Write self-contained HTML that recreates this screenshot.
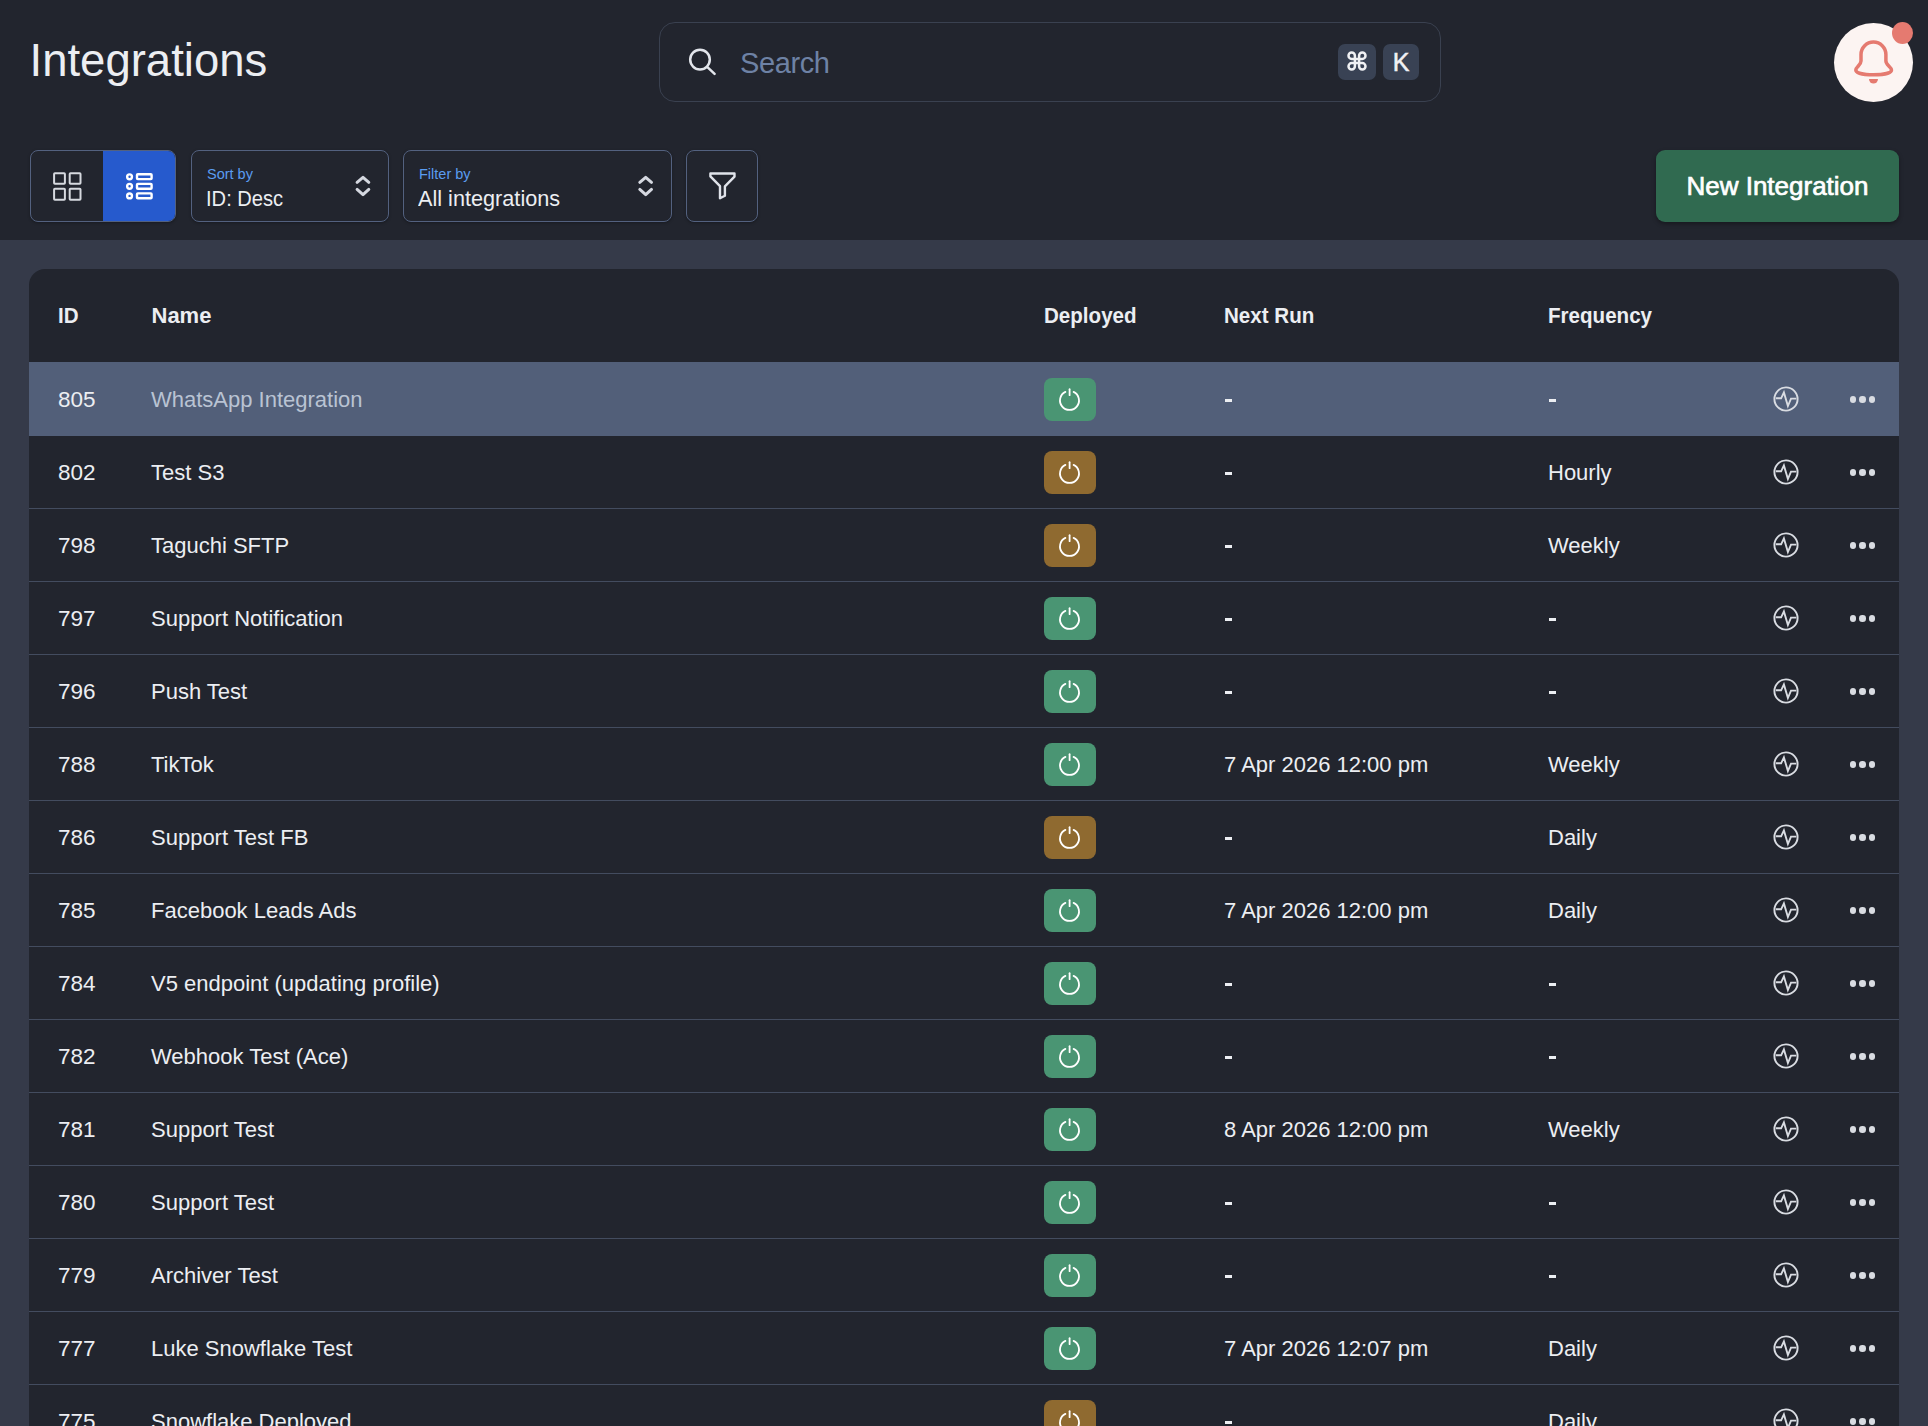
<!DOCTYPE html>
<html><head><meta charset="utf-8">
<style>
*{box-sizing:border-box;margin:0;padding:0}
html,body{width:1928px;height:1426px;overflow:hidden;background:#22252e;font-family:"Liberation Sans",sans-serif;color:#eceef2}
.abs{position:absolute}
#hdr{position:absolute;left:0;top:0;width:1928px;height:240px;background:#22252e}
#title{position:absolute;left:29.5px;top:35px;font-size:45.5px;line-height:52px;color:#eceef2}
#search{position:absolute;left:659px;top:22px;width:782px;height:80px;border:1px solid #3a4150;border-radius:16px;background:#22252e}
#search .ph{position:absolute;left:80px;top:22px;font-size:29px;line-height:36px;color:#6e82a5;letter-spacing:-0.4px}
.kbd{position:absolute;top:21px;height:36px;background:#394254;border-radius:7px;color:#f0f1f4;text-align:center}
#bell{position:absolute;left:1834px;top:22.5px;width:79px;height:79px;border-radius:50%;background:#fcf4f2}
#dot{position:absolute;left:1892px;top:22px;width:21px;height:22px;border-radius:50%;background:#e57a70}
.box{position:absolute;top:150px;height:72px;border:1.5px solid #53617f;border-radius:8px;background:#22252e;box-shadow:0 1px 3px rgba(0,0,0,.3)}
.lbl{position:absolute;font-size:14.5px;line-height:16px;color:#5b9cf0}
.val{position:absolute;font-size:21px;line-height:24px;color:#eceef2}
#newbtn{position:absolute;left:1656px;top:150px;width:243px;height:72px;background:#306a50;border-radius:9px;box-shadow:0 2px 4px rgba(0,0,0,.35);color:#fff;font-size:26px;line-height:72px;text-align:center;-webkit-text-stroke:0.7px #fff}
#band{position:absolute;left:0;top:240px;width:1928px;height:1186px;background:#353a49}
#card{position:absolute;left:29px;top:269px;width:1870px;height:1200px;background:#22252e;border-radius:16px 16px 0 0}
.th{position:absolute;top:35px;font-weight:bold;font-size:22px;line-height:24px;color:#eceef2;transform:scaleX(0.935);transform-origin:0 0}
.row{position:absolute;left:0;width:1870px;height:73px;border-top:1px solid #434c5f}
.row.hl{background:#525f79;border-top-color:#525f79}
.row.h2{border-top-color:#525f79}
.row .c{position:absolute;top:24px;font-size:22px;line-height:26px;color:#eceef2;white-space:nowrap}
.dash{position:absolute;top:36px;width:7px;height:2.8px;background:#eceef2}
.row .c.dt{font-size:22px;top:24px}
.row .c.id{font-size:22.5px;top:24px}
.pw{position:absolute;left:1015px;top:15px;width:52px;height:43px;border-radius:8px}
.g{background:#4a9573}.y{background:#8f6a30}
.pulse{position:absolute;left:1741.5px;top:21.4px}
.dots i{position:absolute;top:33.35px;width:6.5px;height:6.5px;border-radius:50%;background:#d9dce2}
.dots{position:absolute;left:1820.85px;top:0}
.row .c.nm{color:#b9c3d3}
</style></head><body>
<div id="hdr">
  <div id="title">Integrations</div>
  <div id="search">
        <div class="ph">Search</div>
    <div class="kbd" style="left:678px;width:38px"></div>
    <div class="kbd" style="left:723px;width:36px;font-size:25px;line-height:36px;-webkit-text-stroke:0.5px #f0f1f4">K</div>
  </div>
  <div id="bell"></div>
  <div id="dot"></div>
  <div class="box" style="left:30px;width:146px;overflow:hidden"><div class="abs" style="left:72px;top:0;width:74px;height:72px;background:#265acd"></div></div>
  <div class="box" style="left:191px;width:198px"><div class="lbl" style="left:15px;top:15px">Sort by</div><div class="val" style="left:14px;top:36px;font-size:22px;transform:scaleX(0.915);transform-origin:0 0">ID: Desc</div></div>
  <div class="box" style="left:403px;width:269px"><div class="lbl" style="left:15px;top:15px">Filter by</div><div class="val" style="left:14px;top:36px;font-size:22px;transform:scaleX(0.985);transform-origin:0 0">All integrations</div></div>
  <div class="box" style="left:686px;width:72px"></div>
  <div id="newbtn">New Integration</div>
<svg style="position:absolute;left:0;top:0" width="1928" height="240" viewBox="0 0 1928 240">
  <g fill="none" stroke="#e2e5eb" stroke-width="2.5" stroke-linecap="round">
    <circle cx="700" cy="59.6" r="9.8"/><line x1="707.4" y1="67.2" x2="714.6" y2="73.8"/>
  </g>
  <path transform="translate(1347,51)" d="M7.9 15.3V4.7A3.2 3.2 0 1 0 4.7 7.9H15.3A3.2 3.2 0 1 0 12.1 4.7V15.3A3.2 3.2 0 1 0 15.3 12.1H4.7A3.2 3.2 0 1 0 7.9 15.3Z" fill="none" stroke="#f0f1f4" stroke-width="2.5"/>
  <path d="M1861 61V54.5A12.45 12.45 0 0 1 1885.9 54.5V61C1885.9 65 1891.5 67 1891.5 70C1891.5 73 1884 74.8 1873.5 74.8C1863 74.8 1855.8 73 1855.8 70C1855.8 67 1861 65 1861 61Z" fill="none" stroke="#e57a70" stroke-width="3.5" stroke-linejoin="round"/>
  <path d="M1869 79H1878A4.5 4.5 0 0 1 1869 79Z" fill="#e57a70"/>
  <g fill="none" stroke="#d6d9df" stroke-width="2">
    <rect x="54.1" y="173.2" width="10.8" height="10.6" rx="0.8"/><rect x="69.7" y="173.2" width="10.8" height="10.6" rx="0.8"/>
    <rect x="54.1" y="188.8" width="10.8" height="10.9" rx="0.8"/><rect x="69.7" y="188.8" width="10.8" height="10.9" rx="0.8"/>
  </g>
  <g fill="none" stroke="#fff" stroke-width="2.4">
    <circle cx="129.55" cy="176.8" r="2.4"/><circle cx="129.55" cy="186.3" r="2.4"/><circle cx="129.55" cy="195.9" r="2.4"/>
    <rect x="137" y="174.2" width="14.6" height="4.9" rx="0.8"/><rect x="137" y="183.9" width="14.6" height="4.9" rx="0.8"/><rect x="137" y="193.4" width="14.6" height="4.9" rx="0.8"/>
  </g>
  <g fill="none" stroke="#d5d8e0" stroke-width="3" stroke-linecap="round" stroke-linejoin="round">
    <path d="M357.1 182.3L363 177.3L368.8 182.3M357.1 189.4L363 194.7L368.8 189.4"/>
    <path d="M639.8 182.3L645.7 177.3L651.5 182.3M639.8 189.4L645.7 194.7L651.5 189.4"/>
  </g>
  <path d="M710.4 173.5H734.5V176.6L724.9 186.4V195.7L720 198.2V186.2L710.4 176.3Z" fill="none" stroke="#e0e3ea" stroke-width="2.4" stroke-linejoin="round"/>
</svg>
</div>
<div id="band"></div>
<div id="card">
  <div class="th" style="left:29px">ID</div>
  <div class="th" style="left:122.5px;transform:none">Name</div>
  <div class="th" style="left:1015px">Deployed</div>
  <div class="th" style="left:1195px">Next Run</div>
  <div class="th" style="left:1519px">Frequency</div>
  <div id="rows">
<div class="row hl" style="top:93px"><div class="c id" style="left:29px">805</div><div class="c nm" style="left:122px">WhatsApp Integration</div><div class="pw g"><svg width="52" height="43" viewBox="0 0 52 43"><path d="M21.4 13.9A9.5 9.5 0 1 0 29.6 13.9" fill="none" stroke="#fff" stroke-width="1.8" stroke-linecap="round"/><line x1="25.6" y1="11.2" x2="25.6" y2="17.2" stroke="#fff" stroke-width="1.8" stroke-linecap="round"/></svg></div><div class="dash" style="left:1196px"></div><div class="dash" style="left:1520px"></div><svg class="pulse" width="30" height="30" viewBox="0 0 30 30"><circle cx="15" cy="15" r="11.6" fill="none" stroke="#d9dce2" stroke-width="1.9"/><path d="M4.8 14.3H10.1L12.9 8.4L16.9 22L20 14.6H25.3" fill="none" stroke="#d9dce2" stroke-width="1.9" stroke-linejoin="miter"/></svg><div class="dots"><i style="left:0"></i><i style="left:9.4px"></i><i style="left:18.8px"></i></div></div>
<div class="row h2" style="top:166px"><div class="c id" style="left:29px">802</div><div class="c" style="left:122px">Test S3</div><div class="pw y"><svg width="52" height="43" viewBox="0 0 52 43"><path d="M21.4 13.9A9.5 9.5 0 1 0 29.6 13.9" fill="none" stroke="#fff" stroke-width="1.8" stroke-linecap="round"/><line x1="25.6" y1="11.2" x2="25.6" y2="17.2" stroke="#fff" stroke-width="1.8" stroke-linecap="round"/></svg></div><div class="dash" style="left:1196px"></div><div class="c dt" style="left:1519px">Hourly</div><svg class="pulse" width="30" height="30" viewBox="0 0 30 30"><circle cx="15" cy="15" r="11.6" fill="none" stroke="#d9dce2" stroke-width="1.9"/><path d="M4.8 14.3H10.1L12.9 8.4L16.9 22L20 14.6H25.3" fill="none" stroke="#d9dce2" stroke-width="1.9" stroke-linejoin="miter"/></svg><div class="dots"><i style="left:0"></i><i style="left:9.4px"></i><i style="left:18.8px"></i></div></div>
<div class="row" style="top:239px"><div class="c id" style="left:29px">798</div><div class="c" style="left:122px">Taguchi SFTP</div><div class="pw y"><svg width="52" height="43" viewBox="0 0 52 43"><path d="M21.4 13.9A9.5 9.5 0 1 0 29.6 13.9" fill="none" stroke="#fff" stroke-width="1.8" stroke-linecap="round"/><line x1="25.6" y1="11.2" x2="25.6" y2="17.2" stroke="#fff" stroke-width="1.8" stroke-linecap="round"/></svg></div><div class="dash" style="left:1196px"></div><div class="c dt" style="left:1519px">Weekly</div><svg class="pulse" width="30" height="30" viewBox="0 0 30 30"><circle cx="15" cy="15" r="11.6" fill="none" stroke="#d9dce2" stroke-width="1.9"/><path d="M4.8 14.3H10.1L12.9 8.4L16.9 22L20 14.6H25.3" fill="none" stroke="#d9dce2" stroke-width="1.9" stroke-linejoin="miter"/></svg><div class="dots"><i style="left:0"></i><i style="left:9.4px"></i><i style="left:18.8px"></i></div></div>
<div class="row" style="top:312px"><div class="c id" style="left:29px">797</div><div class="c" style="left:122px">Support Notification</div><div class="pw g"><svg width="52" height="43" viewBox="0 0 52 43"><path d="M21.4 13.9A9.5 9.5 0 1 0 29.6 13.9" fill="none" stroke="#fff" stroke-width="1.8" stroke-linecap="round"/><line x1="25.6" y1="11.2" x2="25.6" y2="17.2" stroke="#fff" stroke-width="1.8" stroke-linecap="round"/></svg></div><div class="dash" style="left:1196px"></div><div class="dash" style="left:1520px"></div><svg class="pulse" width="30" height="30" viewBox="0 0 30 30"><circle cx="15" cy="15" r="11.6" fill="none" stroke="#d9dce2" stroke-width="1.9"/><path d="M4.8 14.3H10.1L12.9 8.4L16.9 22L20 14.6H25.3" fill="none" stroke="#d9dce2" stroke-width="1.9" stroke-linejoin="miter"/></svg><div class="dots"><i style="left:0"></i><i style="left:9.4px"></i><i style="left:18.8px"></i></div></div>
<div class="row" style="top:385px"><div class="c id" style="left:29px">796</div><div class="c" style="left:122px">Push Test</div><div class="pw g"><svg width="52" height="43" viewBox="0 0 52 43"><path d="M21.4 13.9A9.5 9.5 0 1 0 29.6 13.9" fill="none" stroke="#fff" stroke-width="1.8" stroke-linecap="round"/><line x1="25.6" y1="11.2" x2="25.6" y2="17.2" stroke="#fff" stroke-width="1.8" stroke-linecap="round"/></svg></div><div class="dash" style="left:1196px"></div><div class="dash" style="left:1520px"></div><svg class="pulse" width="30" height="30" viewBox="0 0 30 30"><circle cx="15" cy="15" r="11.6" fill="none" stroke="#d9dce2" stroke-width="1.9"/><path d="M4.8 14.3H10.1L12.9 8.4L16.9 22L20 14.6H25.3" fill="none" stroke="#d9dce2" stroke-width="1.9" stroke-linejoin="miter"/></svg><div class="dots"><i style="left:0"></i><i style="left:9.4px"></i><i style="left:18.8px"></i></div></div>
<div class="row" style="top:458px"><div class="c id" style="left:29px">788</div><div class="c" style="left:122px">TikTok</div><div class="pw g"><svg width="52" height="43" viewBox="0 0 52 43"><path d="M21.4 13.9A9.5 9.5 0 1 0 29.6 13.9" fill="none" stroke="#fff" stroke-width="1.8" stroke-linecap="round"/><line x1="25.6" y1="11.2" x2="25.6" y2="17.2" stroke="#fff" stroke-width="1.8" stroke-linecap="round"/></svg></div><div class="c dt" style="left:1195px">7 Apr 2026 12:00 pm</div><div class="c dt" style="left:1519px">Weekly</div><svg class="pulse" width="30" height="30" viewBox="0 0 30 30"><circle cx="15" cy="15" r="11.6" fill="none" stroke="#d9dce2" stroke-width="1.9"/><path d="M4.8 14.3H10.1L12.9 8.4L16.9 22L20 14.6H25.3" fill="none" stroke="#d9dce2" stroke-width="1.9" stroke-linejoin="miter"/></svg><div class="dots"><i style="left:0"></i><i style="left:9.4px"></i><i style="left:18.8px"></i></div></div>
<div class="row" style="top:531px"><div class="c id" style="left:29px">786</div><div class="c" style="left:122px">Support Test FB</div><div class="pw y"><svg width="52" height="43" viewBox="0 0 52 43"><path d="M21.4 13.9A9.5 9.5 0 1 0 29.6 13.9" fill="none" stroke="#fff" stroke-width="1.8" stroke-linecap="round"/><line x1="25.6" y1="11.2" x2="25.6" y2="17.2" stroke="#fff" stroke-width="1.8" stroke-linecap="round"/></svg></div><div class="dash" style="left:1196px"></div><div class="c dt" style="left:1519px">Daily</div><svg class="pulse" width="30" height="30" viewBox="0 0 30 30"><circle cx="15" cy="15" r="11.6" fill="none" stroke="#d9dce2" stroke-width="1.9"/><path d="M4.8 14.3H10.1L12.9 8.4L16.9 22L20 14.6H25.3" fill="none" stroke="#d9dce2" stroke-width="1.9" stroke-linejoin="miter"/></svg><div class="dots"><i style="left:0"></i><i style="left:9.4px"></i><i style="left:18.8px"></i></div></div>
<div class="row" style="top:604px"><div class="c id" style="left:29px">785</div><div class="c" style="left:122px">Facebook Leads Ads</div><div class="pw g"><svg width="52" height="43" viewBox="0 0 52 43"><path d="M21.4 13.9A9.5 9.5 0 1 0 29.6 13.9" fill="none" stroke="#fff" stroke-width="1.8" stroke-linecap="round"/><line x1="25.6" y1="11.2" x2="25.6" y2="17.2" stroke="#fff" stroke-width="1.8" stroke-linecap="round"/></svg></div><div class="c dt" style="left:1195px">7 Apr 2026 12:00 pm</div><div class="c dt" style="left:1519px">Daily</div><svg class="pulse" width="30" height="30" viewBox="0 0 30 30"><circle cx="15" cy="15" r="11.6" fill="none" stroke="#d9dce2" stroke-width="1.9"/><path d="M4.8 14.3H10.1L12.9 8.4L16.9 22L20 14.6H25.3" fill="none" stroke="#d9dce2" stroke-width="1.9" stroke-linejoin="miter"/></svg><div class="dots"><i style="left:0"></i><i style="left:9.4px"></i><i style="left:18.8px"></i></div></div>
<div class="row" style="top:677px"><div class="c id" style="left:29px">784</div><div class="c" style="left:122px">V5 endpoint (updating profile)</div><div class="pw g"><svg width="52" height="43" viewBox="0 0 52 43"><path d="M21.4 13.9A9.5 9.5 0 1 0 29.6 13.9" fill="none" stroke="#fff" stroke-width="1.8" stroke-linecap="round"/><line x1="25.6" y1="11.2" x2="25.6" y2="17.2" stroke="#fff" stroke-width="1.8" stroke-linecap="round"/></svg></div><div class="dash" style="left:1196px"></div><div class="dash" style="left:1520px"></div><svg class="pulse" width="30" height="30" viewBox="0 0 30 30"><circle cx="15" cy="15" r="11.6" fill="none" stroke="#d9dce2" stroke-width="1.9"/><path d="M4.8 14.3H10.1L12.9 8.4L16.9 22L20 14.6H25.3" fill="none" stroke="#d9dce2" stroke-width="1.9" stroke-linejoin="miter"/></svg><div class="dots"><i style="left:0"></i><i style="left:9.4px"></i><i style="left:18.8px"></i></div></div>
<div class="row" style="top:750px"><div class="c id" style="left:29px">782</div><div class="c" style="left:122px">Webhook Test (Ace)</div><div class="pw g"><svg width="52" height="43" viewBox="0 0 52 43"><path d="M21.4 13.9A9.5 9.5 0 1 0 29.6 13.9" fill="none" stroke="#fff" stroke-width="1.8" stroke-linecap="round"/><line x1="25.6" y1="11.2" x2="25.6" y2="17.2" stroke="#fff" stroke-width="1.8" stroke-linecap="round"/></svg></div><div class="dash" style="left:1196px"></div><div class="dash" style="left:1520px"></div><svg class="pulse" width="30" height="30" viewBox="0 0 30 30"><circle cx="15" cy="15" r="11.6" fill="none" stroke="#d9dce2" stroke-width="1.9"/><path d="M4.8 14.3H10.1L12.9 8.4L16.9 22L20 14.6H25.3" fill="none" stroke="#d9dce2" stroke-width="1.9" stroke-linejoin="miter"/></svg><div class="dots"><i style="left:0"></i><i style="left:9.4px"></i><i style="left:18.8px"></i></div></div>
<div class="row" style="top:823px"><div class="c id" style="left:29px">781</div><div class="c" style="left:122px">Support Test</div><div class="pw g"><svg width="52" height="43" viewBox="0 0 52 43"><path d="M21.4 13.9A9.5 9.5 0 1 0 29.6 13.9" fill="none" stroke="#fff" stroke-width="1.8" stroke-linecap="round"/><line x1="25.6" y1="11.2" x2="25.6" y2="17.2" stroke="#fff" stroke-width="1.8" stroke-linecap="round"/></svg></div><div class="c dt" style="left:1195px">8 Apr 2026 12:00 pm</div><div class="c dt" style="left:1519px">Weekly</div><svg class="pulse" width="30" height="30" viewBox="0 0 30 30"><circle cx="15" cy="15" r="11.6" fill="none" stroke="#d9dce2" stroke-width="1.9"/><path d="M4.8 14.3H10.1L12.9 8.4L16.9 22L20 14.6H25.3" fill="none" stroke="#d9dce2" stroke-width="1.9" stroke-linejoin="miter"/></svg><div class="dots"><i style="left:0"></i><i style="left:9.4px"></i><i style="left:18.8px"></i></div></div>
<div class="row" style="top:896px"><div class="c id" style="left:29px">780</div><div class="c" style="left:122px">Support Test</div><div class="pw g"><svg width="52" height="43" viewBox="0 0 52 43"><path d="M21.4 13.9A9.5 9.5 0 1 0 29.6 13.9" fill="none" stroke="#fff" stroke-width="1.8" stroke-linecap="round"/><line x1="25.6" y1="11.2" x2="25.6" y2="17.2" stroke="#fff" stroke-width="1.8" stroke-linecap="round"/></svg></div><div class="dash" style="left:1196px"></div><div class="dash" style="left:1520px"></div><svg class="pulse" width="30" height="30" viewBox="0 0 30 30"><circle cx="15" cy="15" r="11.6" fill="none" stroke="#d9dce2" stroke-width="1.9"/><path d="M4.8 14.3H10.1L12.9 8.4L16.9 22L20 14.6H25.3" fill="none" stroke="#d9dce2" stroke-width="1.9" stroke-linejoin="miter"/></svg><div class="dots"><i style="left:0"></i><i style="left:9.4px"></i><i style="left:18.8px"></i></div></div>
<div class="row" style="top:969px"><div class="c id" style="left:29px">779</div><div class="c" style="left:122px">Archiver Test</div><div class="pw g"><svg width="52" height="43" viewBox="0 0 52 43"><path d="M21.4 13.9A9.5 9.5 0 1 0 29.6 13.9" fill="none" stroke="#fff" stroke-width="1.8" stroke-linecap="round"/><line x1="25.6" y1="11.2" x2="25.6" y2="17.2" stroke="#fff" stroke-width="1.8" stroke-linecap="round"/></svg></div><div class="dash" style="left:1196px"></div><div class="dash" style="left:1520px"></div><svg class="pulse" width="30" height="30" viewBox="0 0 30 30"><circle cx="15" cy="15" r="11.6" fill="none" stroke="#d9dce2" stroke-width="1.9"/><path d="M4.8 14.3H10.1L12.9 8.4L16.9 22L20 14.6H25.3" fill="none" stroke="#d9dce2" stroke-width="1.9" stroke-linejoin="miter"/></svg><div class="dots"><i style="left:0"></i><i style="left:9.4px"></i><i style="left:18.8px"></i></div></div>
<div class="row" style="top:1042px"><div class="c id" style="left:29px">777</div><div class="c" style="left:122px">Luke Snowflake Test</div><div class="pw g"><svg width="52" height="43" viewBox="0 0 52 43"><path d="M21.4 13.9A9.5 9.5 0 1 0 29.6 13.9" fill="none" stroke="#fff" stroke-width="1.8" stroke-linecap="round"/><line x1="25.6" y1="11.2" x2="25.6" y2="17.2" stroke="#fff" stroke-width="1.8" stroke-linecap="round"/></svg></div><div class="c dt" style="left:1195px">7 Apr 2026 12:07 pm</div><div class="c dt" style="left:1519px">Daily</div><svg class="pulse" width="30" height="30" viewBox="0 0 30 30"><circle cx="15" cy="15" r="11.6" fill="none" stroke="#d9dce2" stroke-width="1.9"/><path d="M4.8 14.3H10.1L12.9 8.4L16.9 22L20 14.6H25.3" fill="none" stroke="#d9dce2" stroke-width="1.9" stroke-linejoin="miter"/></svg><div class="dots"><i style="left:0"></i><i style="left:9.4px"></i><i style="left:18.8px"></i></div></div>
<div class="row" style="top:1115px"><div class="c id" style="left:29px">775</div><div class="c" style="left:122px">Snowflake Deployed</div><div class="pw y"><svg width="52" height="43" viewBox="0 0 52 43"><path d="M21.4 13.9A9.5 9.5 0 1 0 29.6 13.9" fill="none" stroke="#fff" stroke-width="1.8" stroke-linecap="round"/><line x1="25.6" y1="11.2" x2="25.6" y2="17.2" stroke="#fff" stroke-width="1.8" stroke-linecap="round"/></svg></div><div class="dash" style="left:1196px"></div><div class="c dt" style="left:1519px">Daily</div><svg class="pulse" width="30" height="30" viewBox="0 0 30 30"><circle cx="15" cy="15" r="11.6" fill="none" stroke="#d9dce2" stroke-width="1.9"/><path d="M4.8 14.3H10.1L12.9 8.4L16.9 22L20 14.6H25.3" fill="none" stroke="#d9dce2" stroke-width="1.9" stroke-linejoin="miter"/></svg><div class="dots"><i style="left:0"></i><i style="left:9.4px"></i><i style="left:18.8px"></i></div></div>
</div><!--/rows-->
</div>
</body></html>
